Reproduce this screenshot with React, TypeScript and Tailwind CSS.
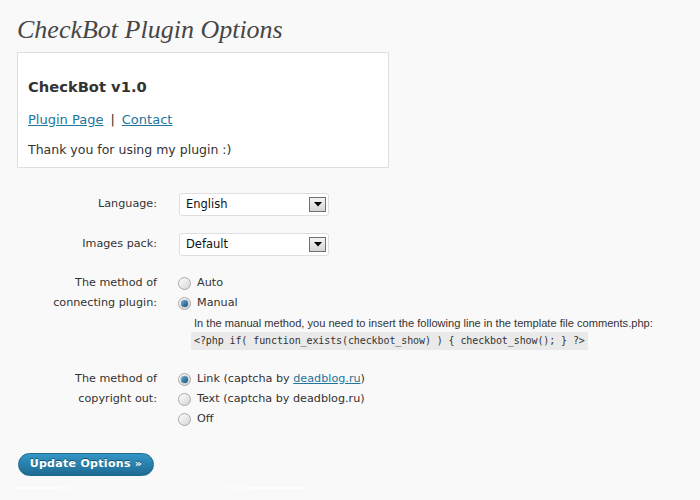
import React from 'react';

const sans = { fontFamily: '"DejaVu Sans", Verdana, sans-serif' };

const Radio = ({ checked }: { checked?: boolean }) => (
  <span className="relative inline-flex h-[13px] w-[13px] shrink-0 items-center justify-center rounded-full border border-[#a8a8a8] bg-gradient-to-br from-[#ffffff] to-[#d4d4d4]">
    {checked && (
      <span className="h-[7px] w-[7px] rounded-full bg-gradient-to-br from-[#6fb3de] to-[#0b4f7a] shadow-[0_0_1px_#333]" />
    )}
  </span>
);

const Select = ({ value }: { value: string }) => (
  <div className="flex h-[23px] w-[150px] items-center justify-between rounded-[3px] border border-[#dfdfdf] bg-white pl-[6px] pr-[2px] text-[11.5px] text-[#111]">
    <span>{value}</span>
    <span className="flex h-[15px] w-[17px] items-center justify-center border border-[#707070] bg-gradient-to-b from-[#f4f4f4] to-[#d6d6d6]">
      <svg width="8" height="5" viewBox="0 0 8 5">
        <path d="M0 0h8L4 4.5z" fill="#000" />
      </svg>
    </span>
  </div>
);

const Option = ({ checked, children }: { checked?: boolean; children: React.ReactNode }) => (
  <div className="flex h-[20px] items-center gap-[6px]">
    <Radio checked={checked} />
    <span>{children}</span>
  </div>
);

export default function App() {
  return (
    <div className="h-[500px] w-full overflow-hidden bg-[#f9f9f9] px-[17px] pt-[13px] text-[#333]" style={sans}>
      <h2
        className="text-[26px] italic leading-[34px] text-[#464646]"
        style={{ fontFamily: '"Liberation Serif", Georgia, serif' }}
      >
        CheckBot Plugin Options
      </h2>

      <div className="mt-[5px] w-[372px] border border-[#dfdfdf] bg-white px-[10px] pb-[7px] pt-[24px] text-[12.5px]">
        <h3 className="text-[14.7px] font-bold leading-[20px] text-[#333]">CheckBot v1.0</h3>
        <p className="mt-[13px] text-[13px] leading-[20px]">
          <a href="#" className="text-[#21759b] underline">Plugin Page</a>
          <span className="mx-[7px]">|</span>
          <a href="#" className="text-[#21759b] underline">Contact</a>
        </p>
        <p className="mt-[10px] leading-[20px]">Thank you for using my plugin :)</p>
      </div>

      <div className="mt-[25px] flex flex-col text-[11.2px]">
        <div className="flex items-center">
          <div className="w-[140px] shrink-0 text-right">Language:</div>
          <div className="ml-[22px]"><Select value="English" /></div>
        </div>

        <div className="mt-[17px] flex items-center">
          <div className="w-[140px] shrink-0 text-right">Images pack:</div>
          <div className="ml-[22px]"><Select value="Default" /></div>
        </div>

        <div className="mt-[17px] flex">
          <div className="w-[140px] shrink-0 text-right leading-[19.5px]">
            The method of<br />connecting plugin:
          </div>
          <div className="ml-[21px]">
            <Option>Auto</Option>
            <Option checked>Manual</Option>
            <div
              className="ml-[16px] mt-[2px] whitespace-nowrap text-[11.1px] leading-[16px]"
              style={{ fontFamily: '"Liberation Sans", Tahoma, sans-serif' }}
            >
              In the manual method, you need to insert the following line in the template file comments.php:
            </div>
            <div
              className="ml-[13px] mt-[1px] inline-block whitespace-nowrap bg-[#eaeaea] px-[3px] text-[10px] leading-[18px] tracking-[-0.1px] text-[#333]"
              style={{ fontFamily: '"DejaVu Sans Mono", Consolas, monospace' }}
            >
              {'<?php if( function_exists(checkbot_show) ) { checkbot_show(); } ?>'}
            </div>
          </div>
        </div>

        <div className="mt-[19px] flex">
          <div className="w-[140px] shrink-0 text-right leading-[20px]">
            The method of<br />copyright out:
          </div>
          <div className="ml-[21px]">
            <Option checked>
              Link (captcha by <a href="#" className="text-[#21759b] underline">deadblog.ru</a>)
            </Option>
            <Option>Text (captcha by deadblog.ru)</Option>
            <Option>Off</Option>
          </div>
        </div>
      </div>

      <button className="ml-px mt-[24px] flex h-[23px] w-[136px] items-center justify-center rounded-full border border-[#1e6a91] bg-gradient-to-b from-[#3595c6] to-[#1d6b93] text-[11px] font-bold tracking-[0.3px] text-white [text-shadow:0_-1px_0_#13506f]">
        Update Options »
      </button>

      <div className="mt-[11px] flex h-[2px] gap-[130px]">
        <div className="w-[75px] bg-gradient-to-r from-white to-white/30" />
        <div className="w-[80px] bg-gradient-to-r from-white/40 to-white" />
      </div>
    </div>
  );
}
